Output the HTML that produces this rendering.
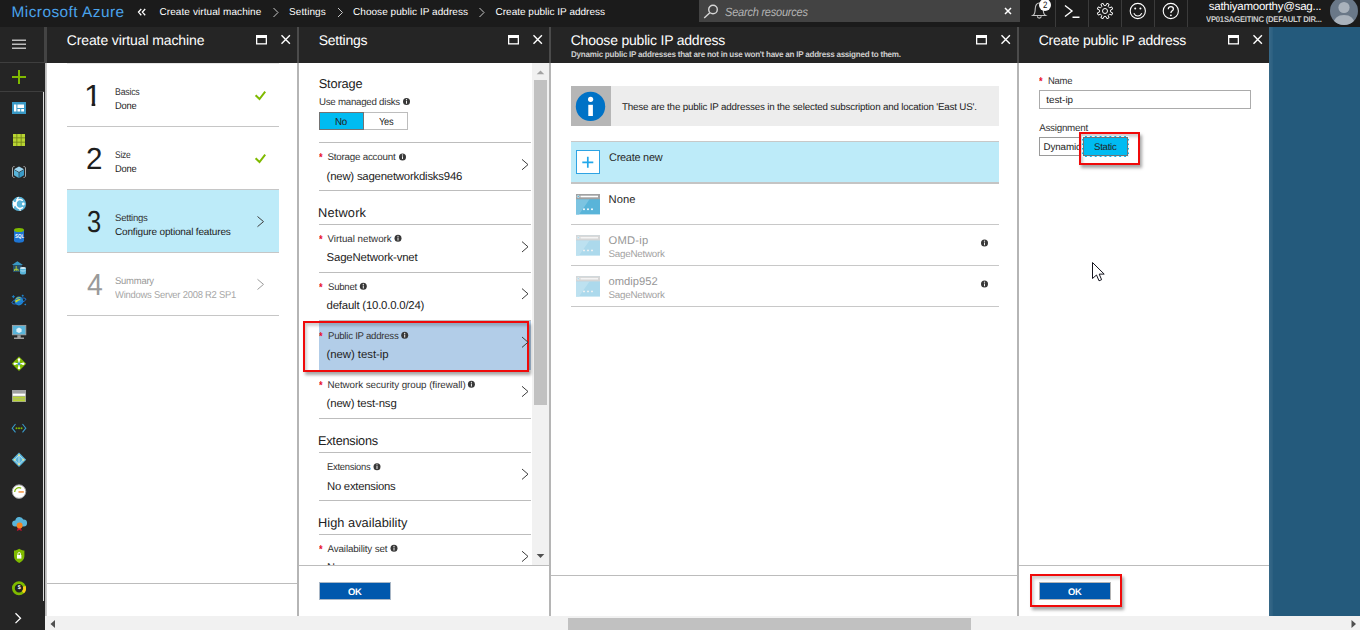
<!DOCTYPE html>
<html lang="en">
<head>
<meta charset="utf-8">
<title>Create public IP address - Microsoft Azure</title>
<style>
*{box-sizing:border-box;margin:0;padding:0}
html,body{width:1360px;height:630px;overflow:hidden;background:#245a7c;font-family:"Liberation Sans",sans-serif;color:#000;text-rendering:geometricPrecision}
body{position:relative}
.abs,.t,.r,svg.i{position:absolute}
.t{white-space:nowrap;line-height:1;transform-origin:0 0;display:block}
svg.i{overflow:visible}
.hl{position:absolute;height:1px;background:#c6c6c6}
.vsep{position:absolute;top:0;width:1px;height:27px;background:#3b3b3b}
.redbox{position:absolute;border:2px solid #f00a0a;box-shadow:2px 3px 3px rgba(0,0,0,.35), inset 2px 3px 3px rgba(0,0,0,.18)}
.okb{position:absolute;background:#0058ad;border:1px solid #a9b7c6}
</style>
</head>
<body>
<!-- ======= BACKGROUNDS ======= -->
<div class="r" style="left:0;top:0;width:1360px;height:27px;background:#1b1b1b"></div>
<div class="r" style="left:0;top:27px;width:45px;height:603px;background:#252525"></div>
<div class="r" style="left:45px;top:63px;width:2px;height:553px;background:linear-gradient(90deg,#b4b4b4,#d2d2d2)"></div>
<div class="r" style="left:44px;top:27px;width:3px;height:36px;background:#444"></div>
<!-- blade bodies -->
<div class="r" style="left:47px;top:27px;width:1222px;height:589px;background:#fff"></div>
<div class="r" style="left:47px;top:27px;width:1222px;height:36px;background:#252525"></div>
<!-- blade separators -->
<div class="r" style="left:297px;top:63px;width:2px;height:553px;background:#b5b5b5"></div>
<div class="r" style="left:549px;top:63px;width:2px;height:553px;background:#b5b5b5"></div>
<div class="r" style="left:1017px;top:63px;width:2px;height:553px;background:#b5b5b5"></div>
<div class="r" style="left:297px;top:27px;width:2px;height:36px;background:#4b4b4b"></div>
<div class="r" style="left:549px;top:27px;width:2px;height:36px;background:#4b4b4b"></div>
<div class="r" style="left:1017px;top:27px;width:2px;height:36px;background:#4b4b4b"></div>
<div class="r" style="left:1269px;top:27px;width:4px;height:589px;background:linear-gradient(90deg,rgba(255,255,255,.09),rgba(255,255,255,.03))"></div>
<!-- h scrollbar -->
<div class="r" style="left:45px;top:616px;width:1315px;height:14px;background:#f1f1f1"></div>
<div class="r" style="left:568px;top:618px;width:403px;height:12px;background:#c1c1c1"></div>
<svg class="i" style="left:0;top:0" width="1360" height="630"><path d="M55 620v8l-4.500-4z M1351.500 620v8l4.500-4z" fill="#505050"/></svg>

<!-- ======= TOP BAR ======= -->
<div class="r" style="left:699px;top:0;width:321px;height:22px;background:#434343"></div>
<svg class="i" style="left:0;top:0" width="1360" height="27" fill="none">
  <!-- breadcrumb chevrons -->
  <g stroke="#fff" stroke-width="1.3"><path d="M141.300 9l-2.800 3.100 2.800 3.100M145.200 9l-2.800 3.100 2.800 3.100"/></g>
  <g stroke="#c8c8c8" stroke-width="1"><path d="M273.5 8l4.5 4.5-4.5 4.5M338 8l4.500 4.500-4.500 4.500M479.500 8l4.500 4.500-4.500 4.500"/></g>
  <!-- search icon -->
  <g stroke="#d6d6d6" stroke-width="1.4"><circle cx="713" cy="9.500" r="4.300"/><path d="M709.800 12.700l-5.600 5.300"/></g>
  <!-- clear x -->
  <path d="M1005 8l6 6M1011 8l-6 6" stroke="#fff" stroke-width="1.500"/>
  <!-- bell -->
  <g stroke="#c4c4c4" stroke-width="1.100"><path d="M1032.800 15.500c2.200-1.300 2.400-3.500 2.400-6.500 0-3.600 1.700-6 4-6s4 2.400 4 6c0 3 .2 5.200 2.400 6.500z"/><path d="M1037.400 16.200a1.900 1.900 0 0 0 3.800 0"/></g>
  <circle cx="1045" cy="5" r="6" fill="#fff"/>
  <!-- cloud shell -->
  <g stroke="#fff" stroke-width="1.400"><path d="M1065 5.500l7 5.500-7 5.500M1072.500 17.300h7"/></g>
  <!-- gear -->
  <g stroke="#fff" stroke-width="1" stroke-linejoin="round"><circle cx="1105" cy="11" r="2.500"/><path d="M1105.86 5.57L1106.91 3.33L1109.07 4.23L1108.23 6.55L1109.45 7.77L1111.77 6.93L1112.67 9.09L1110.43 10.14L1110.43 11.86L1112.67 12.91L1111.77 15.07L1109.45 14.23L1108.23 15.45L1109.07 17.77L1106.91 18.67L1105.86 16.43L1104.14 16.43L1103.09 18.67L1100.93 17.77L1101.77 15.45L1100.55 14.23L1098.23 15.07L1097.33 12.91L1099.57 11.86L1099.57 10.14L1097.33 9.09L1098.23 6.93L1100.55 7.77L1101.77 6.55L1100.93 4.23L1103.09 3.33L1104.14 5.57z"/></g>
  <!-- smiley -->
  <g stroke="#fff" stroke-width="1.100"><circle cx="1137.800" cy="11" r="7.600"/><path d="M1133.800 13.200c1.200 2.200 2.600 2.800 4 2.800s2.800-.6 4-2.800"/></g>
  <circle cx="1135.200" cy="8.600" r="1" fill="#fff"/><circle cx="1140.400" cy="8.600" r="1" fill="#fff"/>
  <!-- help -->
  <g stroke="#fff" stroke-width="1.100"><circle cx="1170.800" cy="11" r="7.600"/><path d="M1168.300 9.200c0-1.700 1.100-2.600 2.600-2.600s2.500 1 2.500 2.300c0 1.900-2.500 1.900-2.500 4" stroke-width="1.300"/></g>
  <circle cx="1170.900" cy="15.300" r=".9" fill="#fff"/>
  <!-- avatar -->
  <clipPath id="av"><circle cx="1344" cy="11" r="14"/></clipPath>
  <circle cx="1344" cy="11" r="14" fill="#6a7888"/>
  <g clip-path="url(#av)" fill="#a9b2bc"><circle cx="1344" cy="7.500" r="5.600"/><path d="M1333 27c0-8 4-12 11-12s11 4 11 12z"/></g>
</svg>
<div class="vsep" style="left:1055px"></div><div class="vsep" style="left:1088px"></div><div class="vsep" style="left:1121px"></div><div class="vsep" style="left:1154px"></div><div class="vsep" style="left:1187px"></div>

<!-- ======= SIDEBAR ======= -->
<div class="r" style="left:0;top:62px;width:44px;height:1px;background:#3e3e3e"></div>
<div class="r" style="left:0;top:91px;width:44px;height:1px;background:#3e3e3e"></div>
<div class="r" style="left:43px;top:92px;width:1px;height:509px;background:#dedede"></div>
<svg class="i" style="left:0;top:0" width="47" height="630">
  <!-- hamburger -->
  <path d="M12 40.200h14M12 44.200h14M12 48.200h14" stroke="#bdbdbd" stroke-width="1.500"/>
  <!-- new -->
  <path d="M19 70v14M12 77h14" stroke="#7fba00" stroke-width="2"/>
  <!-- dashboard -->
  <rect x="12" y="102" width="14" height="12" fill="#3999c6"/>
  <path d="M14 104.500h2.400v7h-2.400zM17.400 104.500h6.600v3.400h-6.600zM17.400 109h2.800v2.500h-2.800zM21.200 109h2.800v2.500h-2.800z" fill="#fff"/>
  <!-- all resources grid -->
  <rect x="13" y="134" width="12" height="12" fill="#76871a"/>
  <g fill="#b8d432"><rect x="13" y="134" width="3.400" height="3.400"/><rect x="17.300" y="134" width="3.400" height="3.400"/><rect x="21.600" y="134" width="3.400" height="3.400"/><rect x="13" y="138.300" width="3.400" height="3.400"/><rect x="17.300" y="138.300" width="3.400" height="3.400"/><rect x="21.600" y="138.300" width="3.400" height="3.400"/><rect x="13" y="142.600" width="3.400" height="3.400"/><rect x="17.300" y="142.600" width="3.400" height="3.400"/><rect x="21.600" y="142.600" width="3.400" height="3.400"/></g>
  <!-- resource groups -->
  <path d="M14.500 166.500c-2 0-2 1-2 2.500v6c0 1.500 0 2.500 2 2.500M23.500 166.500c2 0 2 1 2 2.500v6c0 1.500 0 2.500-2 2.500" stroke="#a8a8a8" stroke-width="1" fill="none"/>
  <path d="M19 166.500l5 2.700-5 2.700-5-2.700z" fill="#9fd6ef"/><path d="M14 169.800l4.700 2.600v5.600l-4.700-2.700z" fill="#59b4d9"/><path d="M24 169.800l-4.700 2.600v5.600l4.700-2.700z" fill="#3999c6"/>
  <!-- app services -->
  <circle cx="19" cy="203.900" r="7.100" fill="#59b4d9"/>
  <clipPath id="gl"><circle cx="19" cy="203.900" r="7.100"/></clipPath><g clip-path="url(#gl)" stroke="#fff" fill="none" stroke-linecap="round"><path d="M22.300 200.300a4.300 4.300 0 1 0 .200 7.300" stroke-width="1.500"/><path d="M14.600 204l-2.300-3.800M14.600 204l-1.600 4.500M17 200.300l1.300-3.200M19.500 208.500l.900 2.200" stroke-width="1.200"/></g>
  <circle cx="14.800" cy="204" r="2" fill="#fff"/><circle cx="23.300" cy="204" r="1.400" fill="#fff"/><circle cx="17.300" cy="199.800" r="1.100" fill="#fff"/>
  <!-- sql -->
  <path d="M14 230v10.500c0 1.300 2.200 2.300 5 2.300s5-1 5-2.300V230z" fill="#1e74d2"/><ellipse cx="19" cy="230" rx="5" ry="2.100" fill="#7fba00"/>
  <!-- sql dw -->
  <path d="M11.800 265l5.600-3.700 5.600 3.700z" fill="#3999c6"/><rect x="13" y="265" width="8.800" height="7" fill="#27506b"/>
  <path d="M16.200 266v5M14.500 269.300h3.600M14.500 269.300v1.700M18.100 269.300v1.700" stroke="#b8d432" stroke-width=".900" fill="none"/>
  <path d="M20 268v5.300c0 .8 1.300 1.300 3 1.300s3-.5 3-1.300V268z" fill="#59b4d9"/><ellipse cx="23" cy="268" rx="3" ry="1.100" fill="#d5edf7"/><path d="M20.600 270.600c1.400.6 3.400.6 4.800 0" stroke="#d5edf7" stroke-width=".700" fill="none"/>
  <!-- cosmos -->
  <circle cx="18.900" cy="301" r="4.400" fill="#1e88d2"/><path d="M15.500 299.500c1.200-2.300 4-2.800 5.800-1.600-1.200.6-.6 2.200-2.300 2.700s-1.700 2.300-3.300 1.700c-.6-.9-.6-1.900-.2-2.800z" fill="#c8d82e"/>
  <ellipse cx="18.900" cy="301" rx="7.300" ry="2.300" transform="rotate(-16 18.900 301)" fill="none" stroke="#1e74d2" stroke-width=".900"/>
  <path d="M13.400 295.200v3M11.900 296.700h3M22.700 294.700v2M21.700 295.700h2M25.300 303.700v1.600M24.500 304.500h1.600" stroke="#1e88d2" stroke-width=".900"/>
  <!-- vm -->
  <rect x="12.400" y="325.400" width="13.400" height="9.400" fill="#59b4d9" stroke="#a4a4a4" stroke-width=".900"/><path d="M17.300 335.200h3.400v2.600h-3.400zM14 337.600h10v1.500h-10z" fill="#a0a0a0"/>
  <path d="M19 327.500l2.600 1.400v2.800l-2.600 1.400-2.600-1.400v-2.800z" fill="#dff1f9"/>
  <!-- load balancer -->
  <path d="M19 356.500l7.200 7.200-7.200 7.200-7.200-7.200z" fill="#7fba00"/>
  <path d="M19 359.500v8.400M14.800 363.700h8.400" stroke="#fff" stroke-width="1.200"/><circle cx="19" cy="359.500" r="1.300" fill="#fff"/><circle cx="19" cy="367.900" r="1.300" fill="#fff"/><circle cx="14.800" cy="363.700" r="1.300" fill="#fff"/><circle cx="23.200" cy="363.700" r="1.300" fill="#fff"/><circle cx="19" cy="363.700" r="1.500" fill="#3999c6"/>
  <!-- storage -->
  <rect x="12" y="390" width="14" height="12" fill="#a0a1a2"/><rect x="12.800" y="393.600" width="12.400" height="2.200" fill="#fff"/><rect x="12.800" y="396.600" width="12.400" height="2" fill="#b8d432"/><rect x="12.800" y="399.300" width="12.400" height="2" fill="#b8d432"/>
  <!-- vnet -->
  <path d="M15.500 424l-3.300 4.200 3.300 4.200M22.500 424l3.300 4.200-3.300 4.200" stroke="#3999c6" stroke-width="1.100" fill="none"/><circle cx="16.500" cy="428.200" r="1" fill="#7fba00"/><circle cx="19" cy="428.200" r="1" fill="#7fba00"/><circle cx="21.500" cy="428.200" r="1" fill="#7fba00"/>
  <!-- aad -->
  <path d="M19 452.600l7.200 7.200-7.200 7.200-7.200-7.200z" fill="#59b4d9"/><path d="M19 455v9.500M14.500 459.800l4.500-4.800 4.500 4.800-4.500 4.700z" stroke="#dff1f9" stroke-width=".7" fill="none"/><circle cx="19" cy="455.200" r="1" fill="#e9e48a"/><circle cx="14.600" cy="459.800" r="1" fill="#e9e48a"/><circle cx="23.400" cy="459.800" r="1" fill="#e9e48a"/><circle cx="19" cy="464.300" r="1" fill="#e9e48a"/>
  <!-- monitor gauge -->
  <circle cx="19" cy="491.600" r="6.800" fill="#fff" stroke="#9a9a9a" stroke-width="1"/><path d="M14.700 492a4.300 4.300 0 0 1 6.500-3.800" stroke="#7fba00" stroke-width="1.200" fill="none"/><path d="M18.500 491.300h5.300v1.300h-5.300z" fill="#f08020"/>
  <!-- advisor -->
  <path d="M15 526.500a3 3 0 0 1 .3-6 4.200 4.200 0 0 1 8-1 3.500 3.500 0 0 1 .5 7z" fill="#59b4d9"/><path d="M17.800 527.500l-1 3.600 2.500-1.200 2.500 1.200-1-3.600z" fill="#c8102e"/><circle cx="19.600" cy="525.500" r="3" fill="#f58220"/>
  <!-- security -->
  <path d="M19.200 548.800c1.800 1.200 3.400 1.700 5.200 1.800v5.600c0 3.200-2.400 5.300-5.200 6.700-2.800-1.400-5.200-3.500-5.200-6.700v-5.600c1.800-.1 3.400-.6 5.200-1.800z" fill="#7fba00"/>
  <rect x="17" y="555" width="4.400" height="3.600" fill="#fff"/><path d="M17.900 555v-1.200a1.300 1.300 0 0 1 2.600 0v1.200" stroke="#fff" stroke-width=".9" fill="none"/>
  <!-- cost -->
  <circle cx="19" cy="588.200" r="5.600" fill="#222" stroke="#7fba00" stroke-width="2.800"/><path d="M24.300 586.400a5.600 5.600 0 0 1-1.300 5.800" stroke="#fcd116" stroke-width="2.800" fill="none"/>
  <!-- expand chevron -->
  <path d="M15.500 613.300l5 4.900-5 4.900" stroke="#fff" stroke-width="1.300" fill="none"/>
</svg>
<span class="t" style="left:14.600px;top:234.600px;font-size:5.600px;font-weight:700;color:#fff;transform:scaleX(.8)">SQL</span>
<span class="t" style="left:17.800px;top:585.600px;font-size:5.500px;font-weight:700;color:#fff">$</span>

<!-- ======= BLADE HEADER ICONS ======= -->
<svg class="i" style="left:255.500px;top:34.500px" width="40" height="12" fill="none" stroke="#fff"><path d="M0 0h11v3h-11z" fill="#fff" stroke="none"/><rect x=".650" y=".650" width="9.700" height="8.200" stroke-width="1.300"/><path d="M25.500 .300l8.400 8.400M33.900 .300l-8.400 8.400" stroke-width="1.400"/></svg>
<svg class="i" style="left:507.500px;top:34.500px" width="40" height="12" fill="none" stroke="#fff"><path d="M0 0h11v3h-11z" fill="#fff" stroke="none"/><rect x=".650" y=".650" width="9.700" height="8.200" stroke-width="1.300"/><path d="M25.500 .300l8.400 8.400M33.900 .300l-8.400 8.400" stroke-width="1.400"/></svg>
<svg class="i" style="left:975.500px;top:34.500px" width="40" height="12" fill="none" stroke="#fff"><path d="M0 0h11v3h-11z" fill="#fff" stroke="none"/><rect x=".650" y=".650" width="9.700" height="8.200" stroke-width="1.300"/><path d="M25.500 .300l8.400 8.400M33.900 .300l-8.400 8.400" stroke-width="1.400"/></svg>
<svg class="i" style="left:1227.500px;top:34.500px" width="40" height="12" fill="none" stroke="#fff"><path d="M0 0h11v3h-11z" fill="#fff" stroke="none"/><rect x=".650" y=".650" width="9.700" height="8.200" stroke-width="1.300"/><path d="M25.500 .300l8.400 8.400M33.900 .300l-8.400 8.400" stroke-width="1.400"/></svg>

<!-- ======= BLADE 1 : Create virtual machine ======= -->
<div class="r" style="left:67px;top:190px;width:212px;height:62px;background:#bdebf9"></div>
<div class="hl" style="left:67px;top:63px;width:212px;background:#e6e6e6"></div>
<div class="hl" style="left:67px;top:126px;width:212px"></div>
<div class="hl" style="left:67px;top:189px;width:212px"></div>
<div class="hl" style="left:67px;top:252px;width:212px"></div>
<div class="hl" style="left:67px;top:315px;width:212px"></div>
<div class="hl" style="left:47px;top:583px;width:250px;background:#bcbcbc"></div>
<svg class="i" style="left:0;top:0" width="300" height="320" fill="none">
  <path d="M255.600 95.200l3.900 3.800 5.700-7.300" stroke="#7fba00" stroke-width="2"/>
  <path d="M255.600 158.200l3.900 3.800 5.700-7.300" stroke="#7fba00" stroke-width="2"/>
  <path d="M257.500 216.500l6 5.100-6 5.100" stroke="#3c3c3c" stroke-width="1"/>
  <path d="M257.500 279.300l6 5.100-6 5.100" stroke="#9c9c9c" stroke-width="1"/>
</svg>

<!-- ======= BLADE 2 : Settings ======= -->
<div class="r" style="left:532px;top:63px;width:17px;height:502px;background:#f1f1f1"></div>
<div class="r" style="left:534px;top:80px;width:13px;height:325px;background:#c1c1c1"></div>
<div class="hl" style="left:319px;top:142px;width:212px;background:#bdbdbd"></div>
<div class="hl" style="left:319px;top:190px;width:212px;background:#bdbdbd"></div>
<div class="hl" style="left:319px;top:224px;width:212px;background:#bdbdbd"></div>
<div class="hl" style="left:319px;top:272px;width:212px;background:#bdbdbd"></div>
<div class="hl" style="left:319px;top:320px;width:212px;background:#bdbdbd"></div>
<div class="hl" style="left:319px;top:418px;width:212px;background:#bdbdbd"></div>
<div class="hl" style="left:319px;top:452px;width:212px;background:#bdbdbd"></div>
<div class="hl" style="left:319px;top:500px;width:212px;background:#bdbdbd"></div>
<div class="hl" style="left:319px;top:534px;width:212px;background:#bdbdbd"></div>
<div class="hl" style="left:299px;top:565px;width:250px;background:#bcbcbc"></div>
<div class="r" style="left:319px;top:112px;width:89px;height:18px;background:#fff;border:1px solid #bdbdbd"></div>
<div class="r" style="left:319px;top:112px;width:45px;height:18px;background:#00bcf2;border:1px solid #737373"></div>
<div class="r" style="left:319px;top:321px;width:212px;height:49px;background:#b2cde8"></div>
<div class="redbox" style="left:303px;top:321px;width:226px;height:51px"></div>
<div class="okb" style="left:319px;top:582px;width:72px;height:18px"></div>
<svg class="i" style="left:0;top:0" width="560" height="630" fill="none">
<circle cx="406.5" cy="101.50" r="3.500" fill="#383838"/><path d="M406.00 100.80h1v2.900h-1z" fill="#f0f0f0"/><circle cx="406.5" cy="99.60" r=".650" fill="#f0f0f0"/>
<circle cx="402.5" cy="156.90" r="3.500" fill="#383838"/><path d="M402.00 156.20h1v2.900h-1z" fill="#f0f0f0"/><circle cx="402.5" cy="155.00" r=".650" fill="#f0f0f0"/>
<circle cx="398" cy="238.20" r="3.500" fill="#383838"/><path d="M397.50 237.50h1v2.900h-1z" fill="#f0f0f0"/><circle cx="398" cy="236.30" r=".650" fill="#f0f0f0"/>
<circle cx="363.3" cy="286.30" r="3.500" fill="#383838"/><path d="M362.80 285.60h1v2.900h-1z" fill="#f0f0f0"/><circle cx="363.3" cy="284.40" r=".650" fill="#f0f0f0"/>
<circle cx="404.7" cy="335.30" r="3.500" fill="#383838"/><path d="M404.20 334.60h1v2.900h-1z" fill="#f0f0f0"/><circle cx="404.7" cy="333.40" r=".650" fill="#f0f0f0"/>
<circle cx="471.4" cy="384.20" r="3.500" fill="#383838"/><path d="M470.90 383.50h1v2.900h-1z" fill="#f0f0f0"/><circle cx="471.4" cy="382.30" r=".650" fill="#f0f0f0"/>
<circle cx="377" cy="466.70" r="3.500" fill="#383838"/><path d="M376.50 466.00h1v2.900h-1z" fill="#f0f0f0"/><circle cx="377" cy="464.80" r=".650" fill="#f0f0f0"/>
<circle cx="394" cy="548.30" r="3.500" fill="#383838"/><path d="M393.50 547.60h1v2.900h-1z" fill="#f0f0f0"/><circle cx="394" cy="546.40" r=".650" fill="#f0f0f0"/>
<path d="M522 159.4l6 5.200-6 5.200" stroke="#3c3c3c" stroke-width="1" fill="none"/>
<path d="M522 241.6l6 5.200-6 5.200" stroke="#3c3c3c" stroke-width="1" fill="none"/>
<path d="M522 288.6l6 5.200-6 5.200" stroke="#3c3c3c" stroke-width="1" fill="none"/>
<path d="M522 337l6 5.200-6 5.200" stroke="#3c3c3c" stroke-width="1" fill="none"/>
<path d="M522 386.3l6 5.200-6 5.200" stroke="#3c3c3c" stroke-width="1" fill="none"/>
<path d="M522 469l6 5.200-6 5.200" stroke="#3c3c3c" stroke-width="1" fill="none"/>
<path d="M522 551.2l6 5.200-6 5.200" stroke="#3c3c3c" stroke-width="1" fill="none"/>
<path d="M536.700 74.300l3.800-3.900 3.800 3.900z" fill="#a3a3a3"/><path d="M536.700 554l3.800 3.900 3.800-3.900z" fill="#505050"/>
</svg>

<!-- ======= BLADE 3 : Choose public IP address ======= -->
<div class="r" style="left:571px;top:86px;width:428px;height:40px;background:#ededed"></div>
<div class="r" style="left:571px;top:86px;width:40px;height:40px;background:#b6b6b6"></div>
<div class="r" style="left:571px;top:142px;width:428px;height:41px;background:#bdebf9"></div>
<div class="hl" style="left:571px;top:141px;width:428px;background:#c8c8c8"></div>
<div class="hl" style="left:571px;top:182px;width:428px;height:2px;background:#c4c4c4"></div>
<div class="hl" style="left:571px;top:224px;width:428px;background:#c8c8c8"></div>
<div class="hl" style="left:571px;top:265px;width:428px;background:#c8c8c8"></div>
<div class="hl" style="left:571px;top:306px;width:428px;background:#c8c8c8"></div>
<div class="hl" style="left:551px;top:575px;width:466px;background:#bcbcbc"></div>
<div class="r" style="left:576px;top:150px;width:24px;height:24px;background:#fff;border:1px solid #2ea3e3"></div>
<svg class="i" style="left:0;top:0" width="1020" height="320" fill="none">
<circle cx="590.500" cy="106.400" r="14.700" fill="#0072c6"/><rect x="588.300" y="104.800" width="4.600" height="11.200" fill="#fff"/><circle cx="590.600" cy="99.300" r="2.600" fill="#fff"/>
<path d="M587.800 156.800v11M582.300 162.300h11" stroke="#22a7ea" stroke-width="1.700"/>
<rect x="576" y="194" width="24" height="20.400" fill="#59b4d9"/><path d="M576 199.2h13.500l-10.500 15.200h-3z" fill="#7cc4e1"/><rect x="576" y="194" width="24" height="5.200" fill="#a0a1a2"/><rect x="580.500" y="195.7" width="17.500" height="1.600" fill="#fff"/><circle cx="578.300" cy="196.5" r="1.100" fill="#59b4d9" stroke="#fff" stroke-width=".500"/><circle cx="584" cy="209.2" r=".950" fill="#fff"/><circle cx="588" cy="209.2" r=".950" fill="#fff"/><circle cx="592" cy="209.2" r=".950" fill="#fff"/>
<rect x="576" y="235.2" width="24" height="20.400" fill="#acd9ec"/><path d="M576 240.39999999999998h13.500l-10.500 15.200h-3z" fill="#bde1f0"/><rect x="576" y="235.2" width="24" height="5.200" fill="#d6d6d6"/><rect x="580.500" y="236.89999999999998" width="17.500" height="1.600" fill="#f4f4f4"/><circle cx="578.300" cy="237.7" r="1.100" fill="#acd9ec" stroke="#f4f4f4" stroke-width=".500"/><circle cx="584" cy="250.39999999999998" r=".950" fill="#f4f4f4"/><circle cx="588" cy="250.39999999999998" r=".950" fill="#f4f4f4"/><circle cx="592" cy="250.39999999999998" r=".950" fill="#f4f4f4"/>
<rect x="576" y="276.2" width="24" height="20.400" fill="#acd9ec"/><path d="M576 281.4h13.500l-10.500 15.200h-3z" fill="#bde1f0"/><rect x="576" y="276.2" width="24" height="5.200" fill="#d6d6d6"/><rect x="580.500" y="277.9" width="17.500" height="1.600" fill="#f4f4f4"/><circle cx="578.300" cy="278.7" r="1.100" fill="#acd9ec" stroke="#f4f4f4" stroke-width=".500"/><circle cx="584" cy="291.4" r=".950" fill="#f4f4f4"/><circle cx="588" cy="291.4" r=".950" fill="#f4f4f4"/><circle cx="592" cy="291.4" r=".950" fill="#f4f4f4"/>
<circle cx="984.5" cy="243.10" r="3.500" fill="#383838"/><path d="M984.00 242.40h1v2.900h-1z" fill="#f0f0f0"/><circle cx="984.5" cy="241.20" r=".650" fill="#f0f0f0"/>
<circle cx="984.5" cy="284.10" r="3.500" fill="#383838"/><path d="M984.00 283.40h1v2.900h-1z" fill="#f0f0f0"/><circle cx="984.5" cy="282.20" r=".650" fill="#f0f0f0"/>
</svg>

<!-- ======= BLADE 4 : Create public IP address ======= -->
<div class="r" style="left:1039px;top:90px;width:212px;height:19px;background:#fff;border:1px solid #ababab"></div>
<div class="r" style="left:1039px;top:137px;width:50px;height:19px;background:#fff;border:1px solid #9a9a9a"></div>
<div class="hl" style="left:1019px;top:565px;width:250px;background:#bcbcbc"></div>


<!-- ======= TEXT ======= -->
<span class="t" style="left:11.50px;top:5px;font-size:15.4px;color:#4aa3eb;letter-spacing:0.464px;">Microsoft Azure</span>
<span class="t" style="left:159.50px;top:8px;font-size:10.0px;color:#fff;letter-spacing:0.084px;">Create virtual machine</span>
<span class="t" style="left:289.00px;top:8px;font-size:10.0px;color:#fff;letter-spacing:0.088px;">Settings</span>
<span class="t" style="left:353.00px;top:8px;font-size:10.0px;color:#fff;letter-spacing:0.053px;">Choose public IP address</span>
<span class="t" style="left:495.50px;top:8px;font-size:10.0px;color:#fff;letter-spacing:0.008px;">Create public IP address</span>
<span class="t" style="left:725.00px;top:6px;font-size:12px;color:#b4b4b4;letter-spacing:-0.250px;transform:scaleX(0.9192);font-style:italic;">Search resources</span>
<span class="t" style="left:1208.75px;top:2px;font-size:11.5px;color:#fff;letter-spacing:-0.250px;">sathiyamoorthy@sag...</span>
<span class="t" style="left:1205.50px;top:15px;font-size:8.3px;color:#cccccc;letter-spacing:-0.250px;transform:scaleX(0.9286);font-weight:700;">VP01SAGEITINC (DEFAULT DIR...</span>
<span class="t" style="left:1042.90px;top:1px;font-size:9.2px;color:#111;transform:scaleX(0.8600);">2</span>
<span class="t" style="left:66.70px;top:33px;font-size:14px;color:#fff;letter-spacing:-0.108px;">Create virtual machine</span>
<span class="t" style="left:84.40px;top:81px;font-size:30.4px;color:#1e1e1e;transform:scaleX(1.0500);clip-path:polygon(0 0,17px 0,17px 21.4px,10.75px 21.4px,10.75px 27px,7.25px 27px,7.25px 21.4px,0 21.4px);">1</span>
<span class="t" style="left:86.03px;top:144px;font-size:30.4px;color:#1e1e1e;transform:scaleX(0.9733);">2</span>
<span class="t" style="left:87.16px;top:207px;font-size:30.4px;color:#1e1e1e;transform:scaleX(0.8400);">3</span>
<span class="t" style="left:87.10px;top:270px;font-size:30.4px;color:#9a9a9a;transform:scaleX(0.9353);">4</span>
<span class="t" style="left:115.00px;top:88px;font-size:9.8px;color:#333;letter-spacing:-0.250px;transform:scaleX(0.8951);">Basics</span>
<span class="t" style="left:115.00px;top:102px;font-size:10.0px;color:#222;letter-spacing:-0.250px;transform:scaleX(0.9324);">Done</span>
<span class="t" style="left:115.00px;top:151px;font-size:9.8px;color:#333;letter-spacing:-0.250px;transform:scaleX(0.8590);">Size</span>
<span class="t" style="left:115.00px;top:165px;font-size:10.0px;color:#222;letter-spacing:-0.250px;transform:scaleX(0.9324);">Done</span>
<span class="t" style="left:115.00px;top:214px;font-size:9.8px;color:#333;letter-spacing:-0.250px;transform:scaleX(0.9778);">Settings</span>
<span class="t" style="left:115.00px;top:228px;font-size:10.0px;color:#222;letter-spacing:-0.165px;">Configure optional features</span>
<span class="t" style="left:115.00px;top:277px;font-size:9.8px;color:#999;letter-spacing:-0.250px;transform:scaleX(0.9675);">Summary</span>
<span class="t" style="left:115.00px;top:291px;font-size:10.0px;color:#a6a6a6;letter-spacing:-0.250px;transform:scaleX(0.9416);">Windows Server 2008 R2 SP1</span>
<span class="t" style="left:318.70px;top:33px;font-size:14px;color:#fff;letter-spacing:-0.250px;">Settings</span>
<span class="t" style="left:318.70px;top:78px;font-size:12.8px;color:#222;letter-spacing:-0.167px;">Storage</span>
<span class="t" style="left:318.70px;top:98px;font-size:9.8px;color:#333;letter-spacing:-0.250px;transform:scaleX(0.9898);">Use managed disks</span>
<span class="t" style="left:335.00px;top:118px;font-size:10.2px;color:#222;letter-spacing:-0.250px;transform:scaleX(0.9613);">No</span>
<span class="t" style="left:378.60px;top:118px;font-size:10.2px;color:#222;letter-spacing:-0.250px;transform:scaleX(0.9111);">Yes</span>
<span class="t" style="left:327.50px;top:153px;font-size:9.8px;color:#333;letter-spacing:-0.230px;">Storage account</span>
<span class="t" style="left:326.60px;top:172px;font-size:11.4px;color:#222;letter-spacing:-0.227px;">(new) sagenetworkdisks946</span>
<span class="t" style="left:318.00px;top:207px;font-size:12.8px;color:#222;letter-spacing:0.178px;">Network</span>
<span class="t" style="left:327.50px;top:235px;font-size:9.8px;color:#333;letter-spacing:-0.030px;">Virtual network</span>
<span class="t" style="left:326.60px;top:253px;font-size:11.4px;color:#222;letter-spacing:-0.176px;">SageNetwork-vnet</span>
<span class="t" style="left:327.50px;top:283px;font-size:9.8px;color:#333;letter-spacing:-0.250px;transform:scaleX(0.9774);">Subnet</span>
<span class="t" style="left:326.60px;top:301px;font-size:11.4px;color:#222;letter-spacing:-0.208px;">default (10.0.0.0/24)</span>
<span class="t" style="left:327.50px;top:332px;font-size:9.8px;color:#333;letter-spacing:-0.250px;transform:scaleX(0.9811);">Public IP address</span>
<span class="t" style="left:326.60px;top:350px;font-size:11.4px;color:#222;letter-spacing:-0.061px;">(new) test-ip</span>
<span class="t" style="left:327.50px;top:381px;font-size:9.8px;color:#333;letter-spacing:-0.055px;">Network security group (firewall)</span>
<span class="t" style="left:326.60px;top:399px;font-size:11.4px;color:#222;letter-spacing:-0.156px;">(new) test-nsg</span>
<span class="t" style="left:318.00px;top:435px;font-size:12.8px;color:#222;letter-spacing:-0.250px;transform:scaleX(0.9958);">Extensions</span>
<span class="t" style="left:327.00px;top:463px;font-size:9.8px;color:#333;letter-spacing:-0.250px;transform:scaleX(0.9547);">Extensions</span>
<span class="t" style="left:327.00px;top:482px;font-size:11.4px;color:#222;letter-spacing:-0.250px;transform:scaleX(0.9930);">No extensions</span>
<span class="t" style="left:318.00px;top:517px;font-size:12.8px;color:#222;letter-spacing:0.031px;">High availability</span>
<span class="t" style="left:327.50px;top:545px;font-size:9.8px;color:#333;letter-spacing:-0.125px;">Availability set</span>
<div class="abs" style="left:0;top:0;width:1360px;height:565px;overflow:hidden"><span class="t" style="left:327.00px;top:563px;font-size:11.4px;color:#222;letter-spacing:-0.250px;transform:scaleX(0.9753);">None</span></div>
<span class="t" style="left:348.00px;top:588px;font-size:9.5px;color:#fff;letter-spacing:-0.250px;transform:scaleX(0.9901);font-weight:700;">OK</span>
<span class="t" style="left:570.70px;top:33px;font-size:14px;color:#fff;letter-spacing:-0.204px;">Choose public IP address</span>
<span class="t" style="left:570.70px;top:50px;font-size:8.3px;color:#cecece;letter-spacing:-0.250px;transform:scaleX(0.9706);font-weight:700;">Dynamic public IP addresses that are not in use won't have an IP address assigned to them.</span>
<span class="t" style="left:622.00px;top:103px;font-size:9.8px;color:#222;letter-spacing:-0.177px;">These are the public IP addresses in the selected subscription and location 'East US'.</span>
<span class="t" style="left:608.50px;top:153px;font-size:11.2px;color:#2a2a2a;letter-spacing:-0.250px;transform:scaleX(0.9753);">Create new</span>
<span class="t" style="left:608.50px;top:195px;font-size:11.2px;color:#2a2a2a;letter-spacing:0.059px;">None</span>
<span class="t" style="left:608.50px;top:236px;font-size:11.2px;color:#979797;letter-spacing:0.238px;">OMD-ip</span>
<span class="t" style="left:608.50px;top:250px;font-size:9.8px;color:#a2a2a2;letter-spacing:-0.241px;">SageNetwork</span>
<span class="t" style="left:608.50px;top:277px;font-size:11.2px;color:#979797;letter-spacing:0.026px;">omdip952</span>
<span class="t" style="left:608.50px;top:291px;font-size:9.8px;color:#a2a2a2;letter-spacing:-0.241px;">SageNetwork</span>
<span class="t" style="left:1038.70px;top:33px;font-size:14px;color:#fff;letter-spacing:-0.237px;">Create public IP address</span>
<span class="t" style="left:1047.90px;top:77px;font-size:9.8px;color:#333;letter-spacing:-0.250px;transform:scaleX(0.9640);">Name</span>
<span class="t" style="left:1046.20px;top:96px;font-size:9.8px;color:#222;letter-spacing:0.028px;">test-ip</span>
<span class="t" style="left:1039.20px;top:124px;font-size:9.8px;color:#333;letter-spacing:-0.250px;">Assignment</span>
<span class="t" style="left:1043.50px;top:143px;font-size:9.8px;color:#222;letter-spacing:-0.118px;">Dynamic</span>
<span class="t" style="left:319.20px;top:153px;font-size:11.5px;color:#e8112d;transform:scaleX(0.8000);font-weight:700;">*</span>
<span class="t" style="left:319.20px;top:235px;font-size:11.5px;color:#e8112d;transform:scaleX(0.8000);font-weight:700;">*</span>
<span class="t" style="left:319.20px;top:283px;font-size:11.5px;color:#e8112d;transform:scaleX(0.8000);font-weight:700;">*</span>
<span class="t" style="left:319.20px;top:332px;font-size:11.5px;color:#e8112d;transform:scaleX(0.8000);font-weight:700;">*</span>
<span class="t" style="left:319.20px;top:381px;font-size:11.5px;color:#e8112d;transform:scaleX(0.8000);font-weight:700;">*</span>
<span class="t" style="left:319.20px;top:545px;font-size:11.5px;color:#e8112d;transform:scaleX(0.8000);font-weight:700;">*</span>
<span class="t" style="left:1039.20px;top:77px;font-size:11.5px;color:#e8112d;transform:scaleX(0.8000);font-weight:700;">*</span>
<!-- ======= OVERLAYS ======= -->
<div class="redbox" style="left:1079px;top:132px;width:61px;height:33px;background:#fff"></div>
<div class="r" style="left:1082px;top:136px;width:47px;height:21px;background:#00bcf2;border:1px dashed #e8f6fc;outline:0"></div>
<div class="r" style="left:1083px;top:137px;width:45px;height:19px;background:#00bcf2;border:1px solid #6e7478"></div>
<div class="redbox" style="left:1030px;top:574px;width:92px;height:33px"></div>
<div class="okb" style="left:1039px;top:582px;width:72px;height:18px;border-color:#b4b4b4"></div>
<svg class="i" style="left:0;top:0" width="1360" height="300"><path d="M1092.500 262.500v16l4-3.500 2.500 5.800 2.600-1.100-2.400-5.600 5 0z" fill="#fff" stroke="#14141e" stroke-width="1" stroke-linejoin="miter"/></svg>
<span class="t" style="left:1094.30px;top:143px;font-size:9.8px;color:#222;letter-spacing:-0.250px;transform:scaleX(0.9806);">Static</span>
<span class="t" style="left:1068.00px;top:588px;font-size:9.5px;color:#fff;letter-spacing:-0.250px;transform:scaleX(0.9831);font-weight:700;">OK</span>
</body>
</html>
